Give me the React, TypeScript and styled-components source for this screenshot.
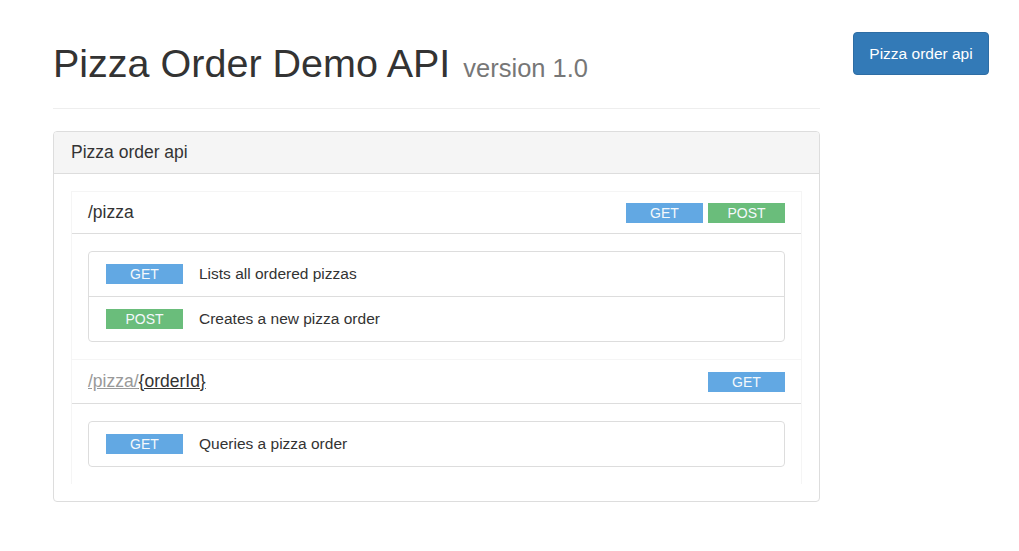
import React from 'react'
import styled, { createGlobalStyle } from 'styled-components'

const GlobalStyle = createGlobalStyle`
  body {
    margin: 0;
    background: #fff;
    font-family: "Liberation Sans", Arial, Helvetica, sans-serif;
    color: #333;
  }
`

type Method = 'GET' | 'POST'

interface Operation {
  method: Method
  summary: string
}

interface Resource {
  base: string
  param?: string
  operations: Operation[]
}

const resources: Resource[] = [
  {
    base: '/pizza',
    operations: [
      { method: 'GET', summary: 'Lists all ordered pizzas' },
      { method: 'POST', summary: 'Creates a new pizza order' },
    ],
  },
  {
    base: '/pizza/',
    param: '{orderId}',
    operations: [{ method: 'GET', summary: 'Queries a pizza order' }],
  },
]

const methodColors: Record<Method, string> = {
  GET: '#62a8e3',
  POST: '#6abd7b',
}

const Page = styled.div`
  display: flex;
  align-items: flex-start;
  gap: 33px;
  padding-left: 53px;
`

const Main = styled.main`
  width: 767px;
`

const Side = styled.aside`
  width: 136px;
  padding-top: 32px;
`

const Header = styled.header`
  padding-top: 41px;
  padding-bottom: 23px;
  border-bottom: 1px solid #eee;
  margin-bottom: 22px;
`

const Title = styled.h1`
  margin: 0;
  font-size: 39.5px;
  font-weight: 400;
  line-height: 44px;
  color: #333;
`

const Version = styled.small`
  font-size: 25.5px;
  line-height: 1;
  color: #777;
  margin-left: 2px;
`

const NavButton = styled.button`
  width: 136px;
  height: 43px;
  border: 1px solid #2e6da4;
  border-radius: 4px;
  background: #337ab7;
  color: #fff;
  font-family: inherit;
  font-size: 15.5px;
  cursor: pointer;
`

const Panel = styled.section`
  border: 1px solid #ddd;
  border-radius: 4px;
  overflow: hidden;
`

const PanelHeading = styled.div`
  height: 41px;
  display: flex;
  align-items: center;
  padding: 0 17px;
  background: #f5f5f5;
  border-bottom: 1px solid #ddd;
  font-size: 17.5px;
  color: #333;
`

const PanelBody = styled.div`
  padding: 17px;
`

const ResourceBox = styled.div`
  border: 1px solid #f5f5f5;
  border-bottom: none;
`

const ResourceHeader = styled.div<{ $linked: boolean }>`
  height: ${({ $linked }) => ($linked ? 43 : 41)}px;
  display: flex;
  align-items: center;
  justify-content: space-between;
  padding: 0 16px;
  border-bottom: 1px solid #ddd;
`

const Path = styled.span`
  font-size: 17.5px;
  color: #333;
`

const PathBase = styled.a<{ $muted: boolean }>`
  color: ${({ $muted }) => ($muted ? '#999' : '#333')};
  text-decoration: ${({ $muted }) => ($muted ? 'underline' : 'none')};
`

const PathParam = styled.a`
  color: #333;
  text-decoration: underline;
`

const Badges = styled.div`
  display: flex;
  gap: 5px;
`

const Badge = styled.span<{ $method: Method }>`
  width: 77px;
  height: 20px;
  display: inline-flex;
  align-items: center;
  justify-content: center;
  background: ${({ $method }) => methodColors[$method]};
  color: #f4f8fb;
  font-size: 14px;
  flex-shrink: 0;
`

const ResourceContent = styled.div`
  padding: 17px 16px;
`

const OperationList = styled.div`
  border: 1px solid #ddd;
  border-radius: 4px;
`

const OperationRow = styled.div`
  height: 44px;
  display: flex;
  align-items: center;
  gap: 16px;
  padding: 0 17px;
  & + & {
    border-top: 1px solid #ddd;
  }
`

const Summary = styled.span`
  font-size: 15.5px;
  color: #333;
`

const App: React.FC = () => {
  return (
    <>
      <GlobalStyle />
      <Page>
        <Main>
          <Header>
            <Title>
              Pizza Order Demo API <Version>version 1.0</Version>
            </Title>
          </Header>
          <Panel>
            <PanelHeading>Pizza order api</PanelHeading>
            <PanelBody>
              {resources.map((res) => (
                <ResourceBox key={res.base + (res.param || '')}>
                  <ResourceHeader $linked={!!res.param}>
                    <Path>
                      <PathBase $muted={!!res.param}>{res.base}</PathBase>
                      {res.param && <PathParam>{res.param}</PathParam>}
                    </Path>
                    <Badges>
                      {res.operations.map((op) => (
                        <Badge key={op.method} $method={op.method}>
                          {op.method}
                        </Badge>
                      ))}
                    </Badges>
                  </ResourceHeader>
                  <ResourceContent>
                    <OperationList>
                      {res.operations.map((op) => (
                        <OperationRow key={op.method}>
                          <Badge $method={op.method}>{op.method}</Badge>
                          <Summary>{op.summary}</Summary>
                        </OperationRow>
                      ))}
                    </OperationList>
                  </ResourceContent>
                </ResourceBox>
              ))}
            </PanelBody>
          </Panel>
        </Main>
        <Side>
          <NavButton>Pizza order api</NavButton>
        </Side>
      </Page>
    </>
  )
}

export default App
